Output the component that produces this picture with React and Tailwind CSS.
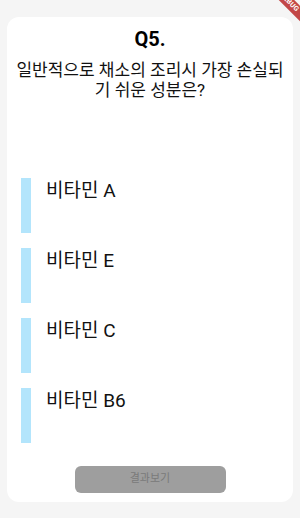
const options = ['비타민 A', '비타민 E', '비타민 C', '비타민 B6'];

export default function App() {
  return (
    <div
      className="relative w-[300px] h-[518px] overflow-hidden bg-[#f5f5f5] pt-[17px] px-[7px]"
      style={{ fontFamily: 'Roboto, "Noto Sans CJK KR", sans-serif' }}
    >
      <div className="h-[485px] bg-white rounded-[12px] flex flex-col">
        <div className="pt-[10px] text-center text-[20px] leading-[24px] font-bold text-black">Q5.</div>
        <div className="mt-[9px] px-[8px] text-center text-[17px] leading-[20px] text-[#111]">
          일반적으로 채소의 조리시 가장 손실되기 쉬운 성분은?
        </div>

        <div className="mt-[78px] flex flex-col gap-[15px]">
          {options.map((opt) => (
            <div key={opt} className="flex items-start h-[55px]">
              <div className="ml-[14px] w-[10px] h-full bg-[#b3e5fc]" />
              <div className="ml-[15px] mt-[1px] text-[19px] leading-[24px] text-[#111]">{opt}</div>
            </div>
          ))}
        </div>

        <button
          type="button"
          disabled
          className="mt-auto mb-[9px] mx-auto w-[151px] h-[27px] rounded-[6px] bg-[#9e9e9e] text-[11px] text-[#7a7a7a]"
        >
          결과보기
        </button>
      </div>

      <div className="absolute left-[259px] top-[-3px] w-[60px] h-[11px] rotate-45 bg-[#b71c1c]/80 flex items-center justify-center text-[7px] font-bold text-white leading-none tracking-wide">
        DEBUG
      </div>
    </div>
  );
}
